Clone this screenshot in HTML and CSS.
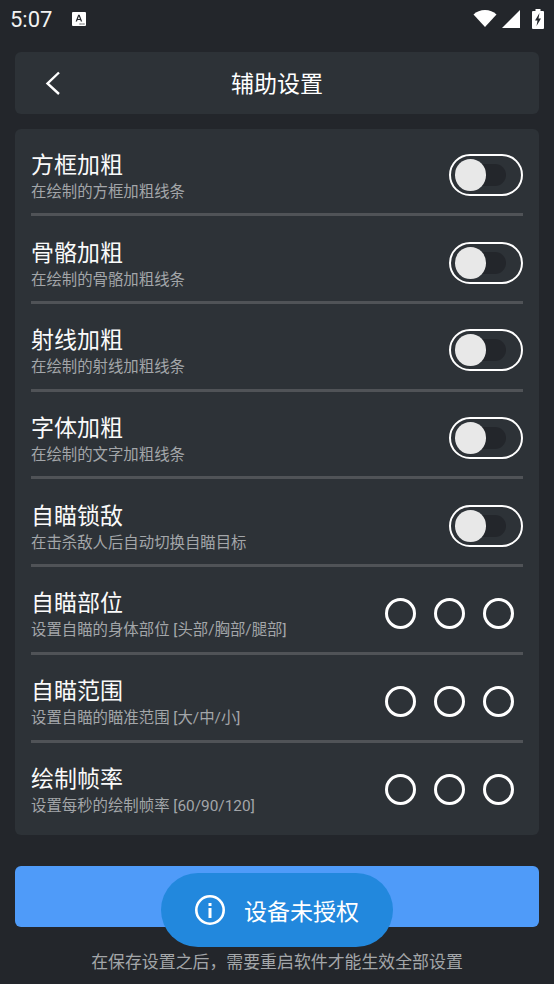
FILE: index.html
```html
<!DOCTYPE html>
<html>
<head>
    <meta charset="UTF-8">
    <title>辅助设置</title>
    <link rel="stylesheet" href="styles.css">
</head>
<body>
<div id="status">
    <span class="time">5:07</span>
    <svg class="note" width="16" height="16" viewBox="0 0 16 16">
        <rect x="1" y="1" width="14" height="14" rx="1" fill="#fff"/>
        <path d="M4.600 10.500L7.200 3.800H8.600L11.200 10.500H9.800L9.300 9.100H6.500L6 10.500ZM6.900 8H8.900L7.900 5.300Z" fill="#23262b"/>
        <path d="M8.500 12.500h1.200v1H8.500zM10.400 12.500h1.200v1h-1.200zM12.300 12.500h1.200v1h-1.200z" fill="#23262b"/>
    </svg>
    <span class="grow"></span>
    <svg width="24" height="20" viewBox="0 0 24 20"><path d="M0.500 5.500C3.500 2.600 7.500 1 12 1s8.500 1.600 11.500 4.500L12 18Z" fill="#fff"/></svg>
    <svg class="signal" width="18" height="18" viewBox="0 0 18 18"><path d="M0 18L18 0V18Z" fill="#fff"/></svg>
    <svg class="battery" width="12" height="20" viewBox="0 0 12 20">
        <path d="M3.500 0H8.500V2H11a1 1 0 0 1 1 1V19a1 1 0 0 1-1 1H1a1 1 0 0 1-1-1V3a1 1 0 0 1 1-1H3.500Z" fill="#fff"/>
        <path d="M7.500 4L3 11.500H5.500L4.500 17L9 9.500H6.500Z" fill="#23262b"/>
    </svg>
</div>

<div class="card head">
    <svg class="back" width="16" height="24" viewBox="0 0 16 24"><path d="M14 1.500L2.500 12.500L14 23" fill="none" stroke="#fff" stroke-width="2.400"/></svg>
    <span class="head_title">辅助设置</span>
</div>

<div class="card list">
    <div class="row">
        <div class="text"><div class="name">方框加粗</div><div class="desc">在绘制的方框加粗线条</div></div>
        <div class="switch"><i class="track"></i><i class="thumb"></i></div>
    </div>
    <div class="row">
        <div class="text"><div class="name">骨骼加粗</div><div class="desc">在绘制的骨骼加粗线条</div></div>
        <div class="switch"><i class="track"></i><i class="thumb"></i></div>
    </div>
    <div class="row">
        <div class="text"><div class="name">射线加粗</div><div class="desc">在绘制的射线加粗线条</div></div>
        <div class="switch"><i class="track"></i><i class="thumb"></i></div>
    </div>
    <div class="row">
        <div class="text"><div class="name">字体加粗</div><div class="desc">在绘制的文字加粗线条</div></div>
        <div class="switch"><i class="track"></i><i class="thumb"></i></div>
    </div>
    <div class="row">
        <div class="text"><div class="name">自瞄锁敌</div><div class="desc">在击杀敌人后自动切换自瞄目标</div></div>
        <div class="switch"><i class="track"></i><i class="thumb"></i></div>
    </div>
    <div class="row">
        <div class="text"><div class="name">自瞄部位</div><div class="desc">设置自瞄的身体部位 [头部/胸部/腿部]</div></div>
        <div class="radios"><i></i><i></i><i></i></div>
    </div>
    <div class="row">
        <div class="text"><div class="name">自瞄范围</div><div class="desc">设置自瞄的瞄准范围 [大/中/小]</div></div>
        <div class="radios"><i></i><i></i><i></i></div>
    </div>
    <div class="row last">
        <div class="text"><div class="name">绘制帧率</div><div class="desc">设置每秒的绘制帧率 [60/90/120]</div></div>
        <div class="radios"><i></i><i></i><i></i></div>
    </div>
</div>

<div class="save"></div>
<div class="tip">在保存设置之后，需要重启软件才能生效全部设置</div>

<div class="toast">
    <svg width="32" height="32" viewBox="0 0 32 32">
        <circle cx="16" cy="16" r="13.700" fill="none" stroke="#fff" stroke-width="2.600"/>
        <rect x="14.500" y="14" width="3" height="10" fill="#fff"/>
        <rect x="14.500" y="9" width="3" height="3" fill="#fff"/>
    </svg>
    <span>设备未授权</span>
</div>
</body>
</html>
```

FILE: styles.css
```css
html, body {
    margin: 0;
    padding: 0;
}

body {
    position: relative;
    width: 554px;
    height: 984px;
    overflow: hidden;
    background-color: #23262B;
    color: #fff;
    font-family: "Roboto", "Noto Sans CJK SC", sans-serif;
}

#status {
    display: flex;
    align-items: center;
    height: 38px;
    padding: 0 10px 0 10px;
}

.time {
    font-size: 22px;
    color: #f2f2f2;
}

.note {
    margin-left: 19px;
}

.grow {
    flex: 1;
}

.signal {
    margin-left: 5px;
}

.battery {
    margin-left: 12px;
}

.card {
    margin: 0 15px;
    border-radius: 6px;
    background-color: #2D3237;
}

.head {
    display: flex;
    align-items: center;
    justify-content: center;
    position: relative;
    height: 62px;
    margin-top: 14px;
}

.back {
    position: absolute;
    left: 30px;
    top: 19px;
}

.head_title {
    font-size: 23px;
    margin-bottom: 2px;
}

.list {
    height: 706px;
    margin-top: 15px;
    padding: 7.400px 16px 0;
    box-sizing: border-box;
}

.row {
    display: flex;
    align-items: center;
    justify-content: space-between;
    box-sizing: border-box;
    height: 80px;
    margin-bottom: 7.700px;
    border-bottom: 3px solid #505357;
}

.row.last {
    height: 78px;
    border-bottom: none;
    margin-bottom: 0;
}

.text {
    padding-top: 4px;
}

.name {
    font-size: 23px;
    line-height: 30px;
    color: #fafafa;
}

.desc {
    font-size: 15.400px;
    line-height: 22px;
    color: #a3a6a9;
}

.switch {
    position: relative;
    box-sizing: border-box;
    width: 74px;
    height: 42px;
    border: 2px solid #fff;
    border-radius: 21px;
}

.track {
    position: absolute;
    left: 9px;
    top: 8px;
    width: 46px;
    height: 22px;
    border-radius: 11px;
    background-color: #23262B;
}

.thumb {
    position: absolute;
    left: 3.500px;
    top: 3px;
    width: 31.500px;
    height: 32px;
    border-radius: 50%;
    background-color: #E8E8E8;
}

.radios {
    display: flex;
    gap: 18px;
    margin-right: 9px;
}

.radios i {
    box-sizing: border-box;
    width: 31px;
    height: 31px;
    border: 3px solid #fff;
    border-radius: 50%;
}

.save {
    height: 61px;
    margin: 31px 15px 0;
    border-radius: 6px;
    background-color: #4F9BF9;
}

.tip {
    margin-top: 23px;
    text-align: center;
    font-size: 16.900px;
    line-height: 24px;
    color: #a3a6a9;
}

.toast {
    position: absolute;
    left: 161px;
    top: 873px;
    display: flex;
    align-items: center;
    gap: 18px;
    box-sizing: border-box;
    width: 232px;
    height: 74px;
    padding-left: 33px;
    border-radius: 37px;
    background-color: #2288DD;
    font-size: 23px;
}
```
